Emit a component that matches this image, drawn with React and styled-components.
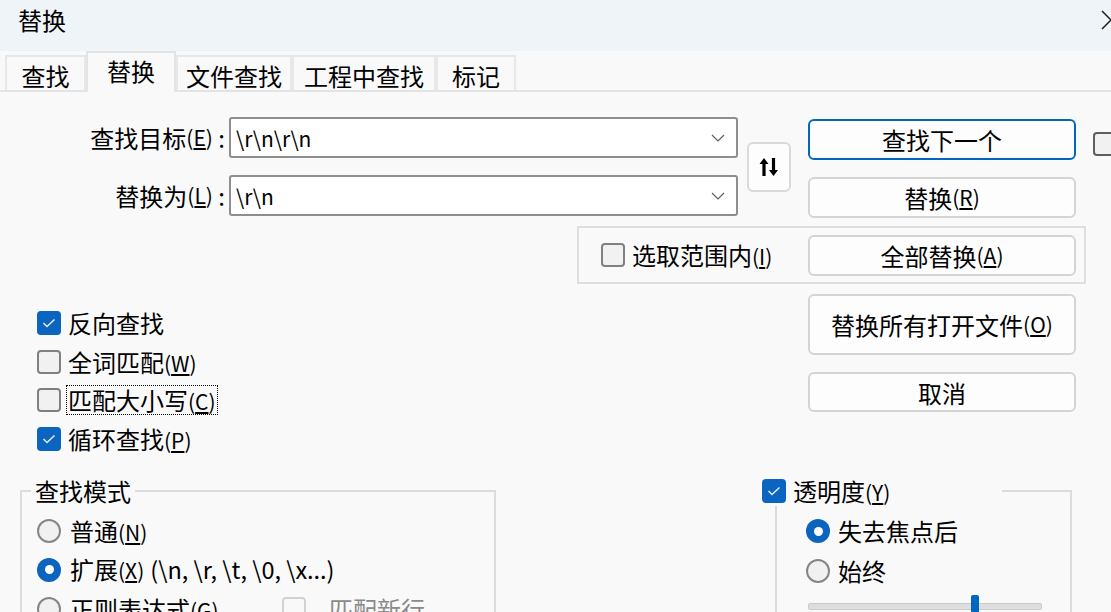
import React from 'react';
import styled, { createGlobalStyle } from 'styled-components';

const GlobalStyle = createGlobalStyle`
  html, body { margin: 0; padding: 0; }
  body {
    width: 1111px;
    height: 612px;
    overflow: hidden;
    background: #f9f9f9;
    font-family: "Noto Sans CJK SC", "Noto Sans", sans-serif;
    font-size: 24px;
    color: #000;
  }
  * { box-sizing: border-box; }
`;

const Window = styled.div`
  width: 1111px;
  height: 612px;
  display: flex;
  flex-direction: column;
  overflow: hidden;
`;

const TitleBar = styled.div`
  height: 51px;
  flex: none;
  background: #eff4f9;
  display: flex;
  align-items: flex-start;
  justify-content: space-between;
  padding: 8px 0 0 18px;
  line-height: 1;
  svg { margin-right: -11px; margin-top: 1px; flex: none; }
`;

const TabStrip = styled.div`
  height: 41px;
  flex: none;
  display: flex;
  align-items: flex-end;
  padding-left: 5px;
  border-bottom: 2px solid #e3e3e3;
`;

const Tab = styled.div`
  width: ${p => p.$w}px;
  flex: none;
  height: ${p => (p.$active ? 41 : 35)}px;
  margin-bottom: ${p => (p.$active ? -2 : 0)}px;
  background: #f9f9f9;
  border: 2px solid ${p => (p.$active ? '#e4e4e4' : '#e8e8e8')};
  border-bottom: none;
  display: flex;
  align-items: center;
  justify-content: center;
  line-height: 1;
  padding-top: ${p => (p.$active ? 0 : 5)}px;
  padding-bottom: ${p => (p.$active ? 4 : 0)}px;
  position: relative;
  z-index: ${p => (p.$active ? 1 : 0)};
`;

const Panel = styled.div`
  flex: 1;
  padding-top: 25px;
  display: flex;
  flex-direction: column;
`;

const TopRow = styled.div`
  display: flex;
  align-items: flex-start;
  & > * { flex: none; }
`;

const Fields = styled.div`
  display: flex;
  flex-direction: column;
  gap: 17px;
`;

const FieldRow = styled.div`
  display: flex;
  align-items: center;
`;

const FieldLabel = styled.label`
  width: 229px;
  padding-right: 4px;
  display: flex;
  justify-content: flex-end;
  align-items: center;
  white-space: nowrap;
`;

const Combo = styled.div`
  width: 509px;
  height: 41px;
  background: #fff;
  border: 2px solid #8e8e8e;
  border-radius: 3px;
  display: flex;
  align-items: center;
  justify-content: space-between;
  padding: 0 11px 0 5px;
  font-size: 21px;
`;

const SwapButton = styled.div`
  width: 44px;
  height: 50px;
  margin: 25px 0 0 9px;
  border: 2px solid #dadada;
  border-radius: 6px;
  background: #fdfdfd;
  display: flex;
  align-items: center;
  justify-content: center;
`;

const ButtonCol = styled.div`
  display: flex;
  flex-direction: column;
  flex: none;
  gap: ${p => p.$gap || 17}px;
  margin: ${p => p.$margin || '0'};
  padding-top: ${p => p.$top || 0}px;
`;

const Button = styled.div`
  width: 268px;
  height: ${p => p.$h || 41}px;
  border: 2px solid ${p => (p.$default ? '#0067c0' : '#d4d4d4')};
  border-radius: 6px;
  background: #fdfdfd;
  display: flex;
  align-items: center;
  justify-content: center;
  white-space: nowrap;
  flex: none;
  margin: ${p => p.$margin || '0'};
`;

const SideCheck = styled.div`
  margin: 11px 0 0 17px;
`;

const SelectGroup = styled.div`
  margin: 8px 0 0 577px;
  width: 509px;
  height: 58px;
  border: 2px solid #dedede;
  display: flex;
  align-items: center;
  padding-left: 22px;
`;

const LowerRow = styled.div`
  display: flex;
  justify-content: space-between;
  align-items: flex-start;
`;

const CheckList = styled.div`
  padding: 20px 0 0 37px;
  display: flex;
  flex-direction: column;
`;

const Option = styled.div`
  height: ${p => p.$h || 38.5}px;
  display: flex;
  align-items: center;
  gap: ${p => p.$gap || 6}px;
  white-space: nowrap;
  flex: none;
  color: ${p => (p.$disabled ? '#8a8a8a' : '#000')};
`;

const OptionText = styled.span`
  line-height: 1;
  padding: 2px 1px;
  width: ${p => (p.$w ? `${p.$w}px` : 'auto')};
  outline: ${p => (p.$focus ? '1px dotted #000' : 'none')};
`;

const Box = styled.span`
  width: 24px;
  height: 24px;
  flex: none;
  border-radius: 4px;
  display: inline-flex;
  align-items: center;
  justify-content: center;
  background: ${p => (p.$checked ? '#0a64c0' : p.$disabled ? 'transparent' : '#f1f1f1')};
  border: ${p =>
    p.$checked ? 'none' : `2px solid ${p.$disabled ? '#d2d2d2' : p.$dark ? '#5e5e5e' : '#808080'}`};
`;

const RadioDot = styled.span`
  width: 24px;
  height: 24px;
  flex: none;
  border-radius: 50%;
  display: inline-flex;
  align-items: center;
  justify-content: center;
  background: ${p => (p.$on ? '#0a64c0' : '#f1f1f1')};
  border: ${p => (p.$on ? 'none' : '2px solid #868686')};
  &::after {
    content: '';
    display: ${p => (p.$on ? 'block' : 'none')};
    width: 9px;
    height: 9px;
    border-radius: 50%;
    background: #fff;
  }
`;

const BottomRow = styled.div`
  display: flex;
  align-items: flex-start;
  margin-top: 18px;
`;

const Group = styled.fieldset`
  margin: 0 0 0 ${p => p.$left}px;
  width: ${p => p.$w}px;
  height: 220px;
  min-width: 0;
  border: 2px solid #dcdcdc;
  padding: 5px 0 0 ${p => p.$pad}px;
  flex: none;
`;

const Legend = styled.legend`
  margin-left: ${p => p.$ml}px;
  padding: ${p => (p.$plain ? '0 4px' : '0')};
  width: ${p => (p.$w ? `${p.$w}px` : 'auto')};
  line-height: 30px;
  height: 30px;
  display: flex;
  align-items: center;
  gap: 6px;
`;

const Slider = styled.div`
  position: relative;
  margin: 12px 0 0 2px;
  width: 234px;
  height: 7px;
  background: #dedede;
  border: 1px solid #cacaca;
  border-radius: 2px;
`;

const Thumb = styled.span`
  position: absolute;
  left: 162px;
  top: -9px;
  width: 8px;
  height: 24px;
  border-radius: 2px;
  background: #0067c0;
`;

const AccWrap = styled.span`
  font-size: 21px;
  line-height: 1;
  u { text-underline-offset: 2px; }
`;

const Extra = styled.span`
  font-size: 23.5px;
  margin-left: 6px;
  line-height: 1;
`;

const Acc = ({ k }) => (
  <AccWrap>
    (<u>{k}</u>)
  </AccWrap>
);

const Check = () => (
  <svg width="14" height="10" viewBox="0 0 14 10">
    <polyline points="1.5,5 5,8.5 12.5,1.5" fill="none" stroke="#e6eef8" strokeWidth="1.5" />
  </svg>
);

const CheckBox = ({ checked, disabled, dark }) => (
  <Box $checked={checked} $disabled={disabled} $dark={dark}>
    {checked && <Check />}
  </Box>
);

const Chevron = () => (
  <svg width="14" height="8" viewBox="0 0 14 8">
    <polyline points="1,1 7,7 13,1" fill="none" stroke="#606060" strokeWidth="1.2" />
  </svg>
);

const SwapIcon = () => (
  <svg width="22" height="22" viewBox="0 0 22 22">
    <path d="M6 2 L10.5 8 H7.6 V20 H4.4 V8 H1.5 Z" fill="#000" />
    <path d="M15.5 20 L20 14 H17.1 V2 H13.9 V14 H11 Z" fill="#000" />
  </svg>
);

const CloseIcon = () => (
  <svg width="22" height="22" viewBox="0 0 22 22">
    <path d="M2 2 L20 20 M20 2 L2 20" stroke="#1c1c1c" strokeWidth="1.5" />
  </svg>
);

const tabs = [
  { name: '查找', w: 81 },
  { name: '替换', w: 90, active: true },
  { name: '文件查找', w: 116 },
  { name: '工程中查找', w: 144 },
  { name: '标记', w: 80 },
];

export default function App() {
  return (
    <Window>
      <GlobalStyle />
      <TitleBar>
        <span>替换</span>
        <CloseIcon />
      </TitleBar>

      <TabStrip>
        {tabs.map(t => (
          <Tab key={t.name} $w={t.w} $active={t.active}>
            {t.name}
          </Tab>
        ))}
      </TabStrip>

      <Panel>
        <TopRow>
          <Fields>
            <FieldRow>
              <FieldLabel>
                查找目标<Acc k="E" />&nbsp;:
              </FieldLabel>
              <Combo>
                <span>{'\\r\\n\\r\\n'}</span>
                <Chevron />
              </Combo>
            </FieldRow>
            <FieldRow>
              <FieldLabel>
                替换为<Acc k="L" />&nbsp;:
              </FieldLabel>
              <Combo>
                <span>{'\\r\\n'}</span>
                <Chevron />
              </Combo>
            </FieldRow>
          </Fields>
          <SwapButton>
            <SwapIcon />
          </SwapButton>
          <ButtonCol $margin="2px 0 0 17px">
            <Button $default>查找下一个</Button>
            <Button>
              替换<Acc k="R" />
            </Button>
          </ButtonCol>
          <SideCheck>
            <CheckBox dark />
          </SideCheck>
        </TopRow>

        <SelectGroup>
          <Option>
            <CheckBox />
            <OptionText>
              选取范围内<Acc k="I" />
            </OptionText>
          </Option>
          <Button $margin="0 8px 0 auto">
            全部替换<Acc k="A" />
          </Button>
        </SelectGroup>

        <LowerRow>
          <CheckList>
            <Option>
              <CheckBox checked />
              <OptionText>反向查找</OptionText>
            </Option>
            <Option>
              <CheckBox />
              <OptionText>
                全词匹配<Acc k="W" />
              </OptionText>
            </Option>
            <Option>
              <CheckBox />
              <OptionText $focus>
                匹配大小写<Acc k="C" />
              </OptionText>
            </Option>
            <Option>
              <CheckBox checked />
              <OptionText>
                循环查找<Acc k="P" />
              </OptionText>
            </Option>
          </CheckList>
          <ButtonCol $margin="0 35px 0 0" $top={10}>
            <Button $h={61}>
              替换所有打开文件<Acc k="O" />
            </Button>
            <Button $h={40}>取消</Button>
          </ButtonCol>
        </LowerRow>

        <BottomRow>
          <Group $left={20} $w={476} $pad={15}>
            <Legend $ml={-6} $plain>
              查找模式
            </Legend>
            <Option $h={39} $gap={8}>
              <RadioDot />
              <OptionText>
                普通<Acc k="N" />
              </OptionText>
            </Option>
            <Option $h={39} $gap={8}>
              <RadioDot $on />
              <OptionText>
                扩展<Acc k="X" />
                <Extra>(\n, \r, \t, \0, \x...)</Extra>
              </OptionText>
            </Option>
            <Option $h={39} $gap={8}>
              <RadioDot />
              <OptionText $w={205}>
                正则表达式<Acc k="G" />
              </OptionText>
              <Option $disabled $gap={22}>
                <CheckBox disabled />
                <OptionText>匹配新行</OptionText>
              </Option>
            </Option>
          </Group>

          <Group $left={279} $w={297} $pad={29}>
            <Legend $ml={-44} $w={240}>
              <CheckBox checked />
              <OptionText>
                透明度<Acc k="Y" />
              </OptionText>
            </Legend>
            <Option $h={40} $gap={7}>
              <RadioDot $on />
              <OptionText>失去焦点后</OptionText>
            </Option>
            <Option $h={40} $gap={7}>
              <RadioDot />
              <OptionText>始终</OptionText>
            </Option>
            <Slider>
              <Thumb />
            </Slider>
          </Group>
        </BottomRow>
      </Panel>
    </Window>
  );
}
